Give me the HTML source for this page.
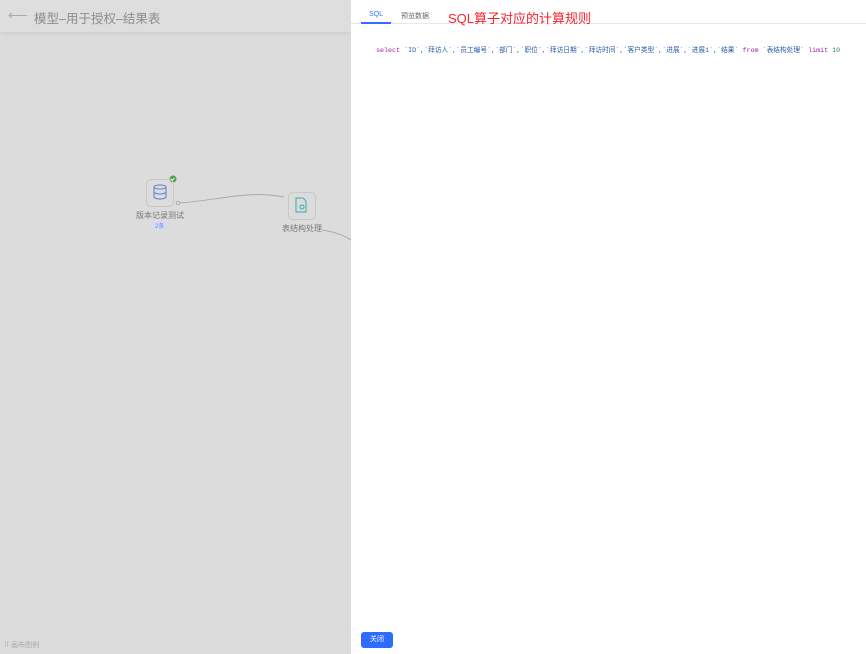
<!DOCTYPE html>
<html><head><meta charset="utf-8"><style>
*{margin:0;padding:0;box-sizing:border-box}
body{width:866px;height:654px;overflow:hidden;background:#dcdcdc;font-family:"Liberation Sans","Noto Sans CJK SC",sans-serif;position:relative}
.hdr{position:absolute;left:0;top:0;width:351px;height:32px;background:#dedede;box-shadow:0 2px 4px rgba(0,0,0,.06)}
.hdr .t{position:absolute;left:34px;top:8px;font-size:12.5px;color:#8c8c8c}
.hdr .b{position:absolute;left:8px;top:7px;font-size:14px;color:#aaa}
.panel{position:absolute;left:351px;top:0;width:515px;height:654px;background:#fff}
.tabs{position:absolute;left:0;top:0;width:515px;height:24px;border-bottom:1px solid #e8e8e8}
.tab1{position:absolute;left:10px;top:11px;width:30px;font-size:7px;color:#3370ff;text-align:center}
.tab1:after{content:"";position:absolute;left:0;top:11px;width:30px;height:2px;background:#3370ff}
.tab2{position:absolute;left:50px;top:11px;font-size:7px;color:#666}
.red{position:absolute;left:97px;top:8px;font-size:13px;color:#f5222d}
.code{position:absolute;left:25px;top:44px;font-family:"Liberation Mono","Noto Sans CJK SC",monospace;font-size:6.7px;color:#2a5aa8;white-space:nowrap}
.kw{color:#a020a0}.num{color:#2a8a5a}
.btn{position:absolute;left:10px;top:632px;width:32px;height:16px;border-radius:3px;background:#2f6bff;color:#fff;font-size:7px;text-align:center;line-height:16px}
.node{position:absolute;width:28px;height:28px;border:1px solid #c8c8c8;border-radius:5px;background:#e2e2e2}
.lbl{position:absolute;font-size:8px;color:#777;white-space:nowrap}
.leg{position:absolute;left:4px;top:640px;font-size:7px;color:#aaa}
</style></head><body>
<div class="hdr"><span class="b">⟵</span><span class="t">模型–用于授权–结果表</span></div>
<svg style="position:absolute;left:0;top:0" width="351" height="654">
<path d="M180 203 C220 200 250 190 284 197" stroke="#aaa" fill="none" stroke-width="1"/>
<circle cx="178" cy="203" r="1.8" fill="#ddd" stroke="#999" stroke-width=".7"/>
<path d="M322 230 C335 232 345 236 351 240" stroke="#aaa" fill="none"/>
<circle cx="173" cy="179" r="3.5" fill="#52a052"/>
<path d="M171.3 179 l1.2 1.2 2-2" stroke="#fff" fill="none" stroke-width=".9"/>
<g fill="none" stroke="#5b7fd6" stroke-width="1"><ellipse cx="160" cy="187" rx="6" ry="2"/><path d="M154 187v10c0 1 3 2 6 2s6-1 6-2v-10M154 192c0 1 3 2 6 2s6-1 6-2"/></g>
<g fill="none" stroke="#3aa8a8" stroke-width="1"><path d="M296 198h7l3 3v11h-10z"/><circle cx="302" cy="207" r="2"/></g>
</svg>
<div class="node" style="left:146px;top:179px;background:transparent"></div>
<div class="node" style="left:288px;top:192px;background:transparent"></div>
<div class="lbl" style="left:136px;top:210px">版本记录测试</div>
<div class="lbl" style="left:153px;top:221px;font-size:6px;color:#6a8ee0;background:#d4dcf0;padding:0 2px">2条</div>
<div class="lbl" style="left:282px;top:223px">表结构处理</div>
<div class="leg">⠿ 画布图例</div>
<div class="panel">
<div class="tabs"><div class="tab1">SQL</div><div class="tab2">预览数据</div><div class="red">SQL算子对应的计算规则</div></div>
<div class="code"><span class="kw">select</span> `ID`,`拜访人`,`员工编号`,`部门`,`职位`,`拜访日期`,`拜访时间`,`客户类型`,`进展`,`进展1`,`结果` <span class="kw">from</span> `表结构处理` <span class="kw">limit</span> <span class="num">10</span></div>
<div class="btn">关闭</div>
</div>
</body></html>
